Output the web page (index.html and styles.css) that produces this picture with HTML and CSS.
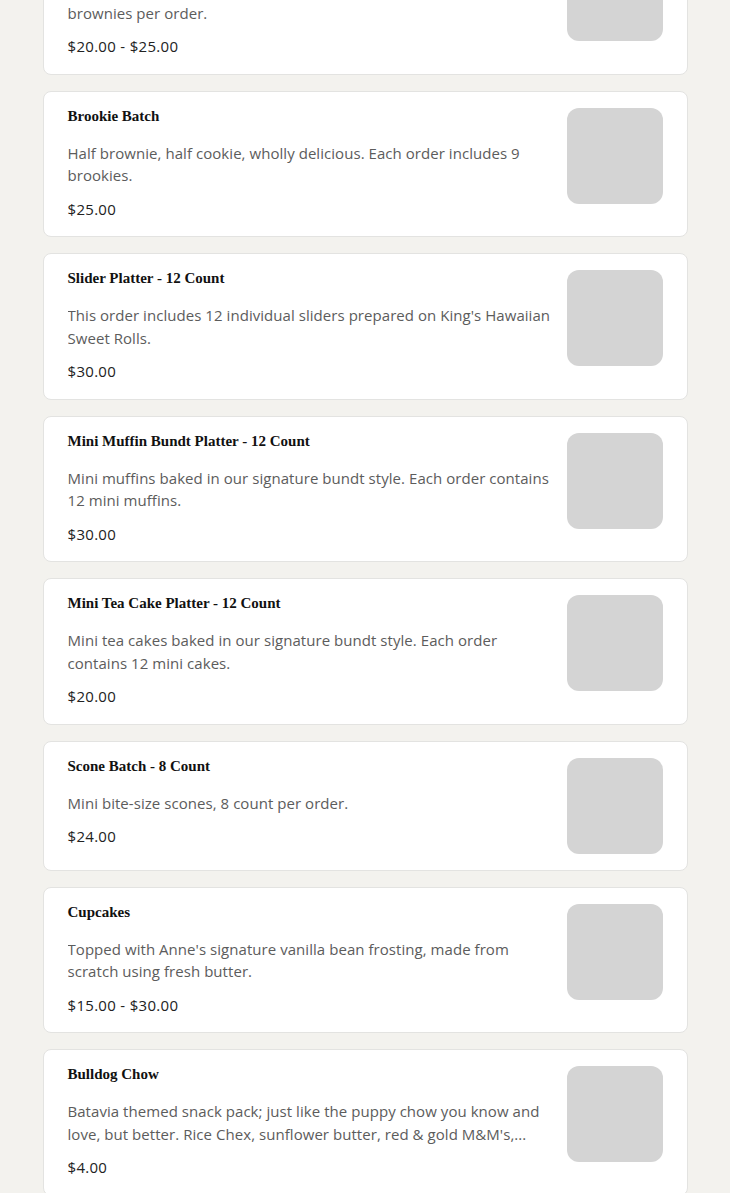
FILE: index.html
```html
<!DOCTYPE html>
<html lang="en">
<head>
<meta charset="utf-8">
<title>Menu</title>
<link rel="stylesheet" href="styles.css">
</head>
<body>
<main class="menu">
  <article class="item">
    <div class="info">
      <h3 class="name">Brownie Batch</h3>
      <p class="desc">Fudgy brownies baked from scratch. Each order includes 6 or 12 brownies per order.</p>
      <p class="price">$20.00 - $25.00</p>
    </div>
    <div class="thumb"></div>
  </article>
  <article class="item">
    <div class="info">
      <h3 class="name">Brookie Batch</h3>
      <p class="desc">Half brownie, half cookie, wholly delicious. Each order includes 9 brookies.</p>
      <p class="price">$25.00</p>
    </div>
    <div class="thumb"></div>
  </article>
  <article class="item">
    <div class="info">
      <h3 class="name">Slider Platter - 12 Count</h3>
      <p class="desc">This order includes 12 individual sliders prepared on King's Hawaiian Sweet Rolls.</p>
      <p class="price">$30.00</p>
    </div>
    <div class="thumb"></div>
  </article>
  <article class="item">
    <div class="info">
      <h3 class="name">Mini Muffin Bundt Platter - 12 Count</h3>
      <p class="desc">Mini muffins baked in our signature bundt style. Each order contains 12 mini muffins.</p>
      <p class="price">$30.00</p>
    </div>
    <div class="thumb"></div>
  </article>
  <article class="item">
    <div class="info">
      <h3 class="name">Mini Tea Cake Platter - 12 Count</h3>
      <p class="desc">Mini tea cakes baked in our signature bundt style. Each order contains 12 mini cakes.</p>
      <p class="price">$20.00</p>
    </div>
    <div class="thumb"></div>
  </article>
  <article class="item">
    <div class="info">
      <h3 class="name">Scone Batch - 8 Count</h3>
      <p class="desc">Mini bite-size scones, 8 count per order.</p>
      <p class="price">$24.00</p>
    </div>
    <div class="thumb"></div>
  </article>
  <article class="item">
    <div class="info">
      <h3 class="name">Cupcakes</h3>
      <p class="desc">Topped with Anne's signature vanilla bean frosting, made from scratch using fresh butter.</p>
      <p class="price">$15.00 - $30.00</p>
    </div>
    <div class="thumb"></div>
  </article>
  <article class="item">
    <div class="info">
      <h3 class="name">Bulldog Chow</h3>
      <p class="desc">Batavia themed snack pack; just like the puppy chow you know and love, but better. Rice Chex, sunflower butter, red &amp; gold M&amp;M's,...</p>
      <p class="price">$4.00</p>
    </div>
    <div class="thumb"></div>
  </article>
</main>
</body>
</html>
```
FILE: styles.css
```css
html, body {
  margin: 0;
  padding: 0;
  background: #f3f2ee;
}
body {
  font-family: "Open Sans", "Liberation Sans", sans-serif;
  overflow: hidden;
}
.menu {
  width: 645px;
  margin: -72px auto 0;
  display: flex;
  flex-direction: column;
  gap: 16px;
}
.item {
  box-sizing: border-box;
  background: #fff;
  border: 1px solid #e3e3e1;
  border-radius: 8px;
  padding: 16px 24px;
  display: flex;
  gap: 16px;
  align-items: flex-start;
}
.info {
  flex: 1;
  min-width: 0;
}
.name {
  margin: 1px 0 19px;
  font-family: "Liberation Serif", "Times New Roman", serif;
  font-weight: 700;
  font-size: 15px;
  line-height: 14px;
  color: #111;
}
.desc {
  margin: 0 0 11px;
  font-size: 15px;
  line-height: 22.5px;
  letter-spacing: 0.05px;
  color: #5c5c5c;
  display: -webkit-box;
  -webkit-line-clamp: 2;
  -webkit-box-orient: vertical;
  overflow: hidden;
}
.price {
  margin: 0;
  font-size: 15px;
  line-height: 22.5px;
  letter-spacing: 0.3px;
  color: #222;
}
.thumb {
  flex: none;
  width: 96px;
  height: 96px;
  border-radius: 12px;
  background: #d4d4d4;
}
```
